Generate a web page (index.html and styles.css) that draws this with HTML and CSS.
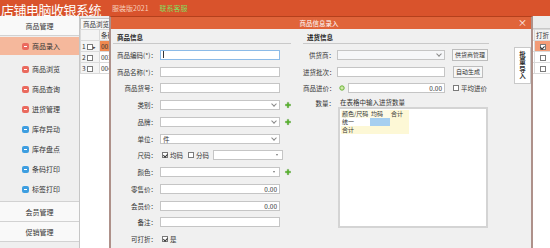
FILE: index.html
```html
<!DOCTYPE html>
<html lang="zh-CN">

<head>
    <meta charset="UTF-8">
    <title>店铺电脑收银系统</title>
    <link rel="stylesheet" href="styles.css">
</head>

<body>
    <div class="topbar">
        <span class="app-title">店铺电脑收银系统</span>
        <span class="app-edition">服装版2021</span>
        <span class="app-contact">联系客服</span>
    </div>

    <div class="main">
        <div class="sidebar">
            <div class="nav-group">商品管理</div>
            <ul class="nav-list">
                <li class="active"><i class="ico red"></i>商品录入</li>
                <li><i class="ico red"></i>商品浏览</li>
                <li><i class="ico red"></i>商品查询</li>
                <li><i class="ico red"></i>进货管理</li>
                <li><i class="ico blue"></i>库存异动</li>
                <li><i class="ico blue"></i>库存盘点</li>
                <li><i class="ico blue"></i>条码打印</li>
                <li><i class="ico blue"></i>标签打印</li>
            </ul>
            <div class="nav-group">会员管理</div>
            <div class="nav-group">促销管理</div>
        </div>

        <div class="browse">
            <div class="tab-bar"><span class="tab">商品浏览</span></div>
            <table class="goods-grid">
                <colgroup>
                    <col class="c-no">
                    <col class="c-code">
                    <col>
                    <col class="c-disc">
                </colgroup>
                <tr class="head">
                    <th></th>
                    <th>条码</th>
                    <th></th>
                    <th>打折</th>
                </tr>
                <tr class="cur">
                    <td class="rn">1 <i class="cb"></i><span class="ptr">▸</span></td>
                    <td class="hot">001</td>
                    <td></td>
                    <td class="sel-cell"><i class="cb on"></i></td>
                </tr>
                <tr>
                    <td class="rn">2 <i class="cb"></i></td>
                    <td>002</td>
                    <td></td>
                    <td><i class="cb"></i></td>
                </tr>
                <tr>
                    <td class="rn">3 <i class="cb"></i></td>
                    <td>004</td>
                    <td></td>
                    <td><i class="cb"></i></td>
                </tr>
            </table>

            <!-- 录入窗口 -->
            <div class="dialog">
                <div class="dlg-title">
                    <span></span>
                    <span>商品信息录入</span>
                    <span class="dlg-close">×</span>
                </div>
                <div class="dlg-body">
                    <div class="grp grp-goods">
                        <div class="grp-head">商品信息</div>
                        <div class="rows">
                            <div class="row">
                                <span class="lbl">商品编码(*)：</span>
                                <div class="field focus"><i class="caret"></i></div>
                            </div>
                            <div class="row">
                                <span class="lbl">商品名称(*)：</span>
                                <div class="field"></div>
                            </div>
                            <div class="row">
                                <span class="lbl">商品货号：</span>
                                <div class="field"></div>
                            </div>
                            <div class="row">
                                <span class="lbl">类别：</span>
                                <div class="field sel"></div>
                                <svg class="plus" viewBox="0 0 8 8"><path d="M3 .5h2v2.5h2.5v2H5v2.5H3V5H.5V3H3z" /></svg>
                            </div>
                            <div class="row">
                                <span class="lbl">品牌：</span>
                                <div class="field sel"></div>
                                <svg class="plus" viewBox="0 0 8 8"><path d="M3 .5h2v2.5h2.5v2H5v2.5H3V5H.5V3H3z" /></svg>
                            </div>
                            <div class="row">
                                <span class="lbl">单位：</span>
                                <div class="field sel">件</div>
                            </div>
                            <div class="row">
                                <span class="lbl">尺码：</span>
                                <i class="cb on first"></i><span>均码</span>
                                <i class="cb gap"></i><span>分码</span>
                                <div class="field sel tri size-sel"></div>
                            </div>
                            <div class="row">
                                <span class="lbl">颜色：</span>
                                <div class="field sel tri"></div>
                                <svg class="plus" viewBox="0 0 8 8"><path d="M3 .5h2v2.5h2.5v2H5v2.5H3V5H.5V3H3z" /></svg>
                            </div>
                            <div class="row">
                                <span class="lbl">零售价：</span>
                                <div class="field num">0.00</div>
                            </div>
                            <div class="row">
                                <span class="lbl">会员价：</span>
                                <div class="field num">0.00</div>
                            </div>
                            <div class="row">
                                <span class="lbl">备注：</span>
                                <div class="field"></div>
                            </div>
                            <div class="row">
                                <span class="lbl">可打折：</span>
                                <i class="cb on first"></i><span>是</span>
                            </div>
                        </div>
                    </div>

                    <div class="grp grp-stock">
                        <div class="grp-head">进货信息</div>
                        <div class="rows">
                            <div class="row">
                                <span class="lbl">供货商：</span>
                                <div class="field sel shaded"></div>
                                <span class="btn btn-wide">供货商管理</span>
                            </div>
                            <div class="row">
                                <span class="lbl">进货批次：</span>
                                <div class="field"></div>
                                <span class="btn">自动生成</span>
                            </div>
                            <div class="row">
                                <span class="lbl">商品进价：</span>
                                <svg class="dot" viewBox="0 0 6 6"><circle cx="3" cy="3" r="2.2" /></svg>
                                <div class="field num short">0.00</div>
                                <i class="cb gap-l"></i><span>平均进价</span>
                            </div>
                            <div class="row qty">
                                <span class="lbl">数量：</span>
                                <div class="qty-box">
                                    <div class="hint">在表格中输入进货数量</div>
                                    <div class="qty-grid">
                                        <table class="mini">
                                            <tr class="mh">
                                                <td>颜色/尺码</td>
                                                <td>均码</td>
                                                <td class="ys">合计</td>
                                            </tr>
                                            <tr>
                                                <td class="wt">统一</td>
                                                <td class="bl"></td>
                                                <td class="ys"></td>
                                            </tr>
                                            <tr class="ys">
                                                <td>合计</td>
                                                <td></td>
                                                <td></td>
                                            </tr>
                                        </table>
                                    </div>
                                </div>
                            </div>
                        </div>
                    </div>

                    <div class="batch-btn">批量导入</div>
                </div>
            </div>
        </div>
    </div>
</body>

</html>
```

FILE: styles.css
```css
* {
    box-sizing: border-box;
}

html,
body {
    margin: 0;
    padding: 0;
}

body {
    width: 550px;
    height: 248px;
    overflow: hidden;
    font-family: "Noto Sans CJK SC", "Noto Sans", sans-serif;
    font-size: 7px;
    color: #333;
    background: #efefef;
}

/* 顶部标题 */
.topbar {
    height: 16px;
    display: flex;
    align-items: flex-start;
    padding-left: 1px;
    background: #d9532c;
    white-space: nowrap;
}

.app-title {
    padding-top: 2px;
    font-size: 13px;
    line-height: 16px;
    letter-spacing: -0.5px;
    color: #fff;
}

.app-edition {
    align-self: center;
    margin-left: 11px;
    color: #f7cdb9;
}

.app-contact {
    align-self: center;
    margin-left: 11px;
    color: #86db5e;
}

.main {
    display: flex;
    height: 232px;
}

/* 左侧菜单 */
.sidebar {
    width: 80px;
    flex: none;
    background: #efefef;
    border-right: 1px solid #c6c6c6;
}

.nav-group {
    height: 20px;
    line-height: 20px;
    text-align: center;
    background: #f9f9f9;
    border-bottom: 1px solid #d2d2d2;
}

.nav-list {
    list-style: none;
    margin: 0;
    padding: 1px 0 2px;
    border-bottom: 1px solid #d2d2d2;
}

.nav-list li {
    height: 20px;
    display: flex;
    align-items: center;
    padding-left: 22px;
}

.nav-list li.active {
    height: 18px;
    margin-bottom: 4px;
    background: #f5b89c;
}

.ico {
    width: 7px;
    height: 7px;
    margin-right: 3px;
    border-radius: 2px;
    display: flex;
    align-items: center;
    justify-content: center;
}

.ico::after {
    content: "";
    width: 3px;
    height: 1px;
    background: #fff;
}

.ico.red {
    background: #ea6a5e;
}

.ico.blue {
    background: #3d9ee0;
}

/* 商品浏览表格 */
.browse {
    flex: 1;
    position: relative;
    background: #fff;
}

.tab-bar {
    height: 13px;
    padding-top: 2px;
    background: #ececec;
    border-bottom: 1px solid #c8c8c8;
}

.tab {
    display: inline-block;
    height: 11px;
    line-height: 10px;
    padding: 0 2px;
    background: #f8f8f8;
    border: 1px solid #c4c4c4;
    border-bottom: none;
    font-size: 6.5px;
}

.goods-grid {
    width: 471px;
    table-layout: fixed;
    border-collapse: collapse;
    font-size: 6.5px;
}

.c-no {
    width: 19px;
}

.c-code {
    width: 30px;
}

.c-disc {
    width: 16px;
}

.goods-grid th,
.goods-grid td {
    height: 11px;
    padding: 0 1px;
    border: 1px solid #dadada;
    text-align: left;
    font-weight: normal;
    white-space: nowrap;
    overflow: hidden;
}

.goods-grid th {
    background: #f4f4f4;
}

.goods-grid td.rn {
    background: #f4f4f4;
}

.goods-grid td.hot {
    background: #f0894f;
}

.goods-grid td.sel-cell {
    background: #f39b76;
}

.goods-grid td:last-child {
    text-align: center;
}

.ptr {
    font-size: 5px;
}

/* 复选框 */
.cb {
    width: 6px;
    height: 6px;
    display: inline-flex;
    align-items: center;
    justify-content: center;
    vertical-align: middle;
    background: #fff;
    border: 1px solid #7a7a7a;
}

.cb.on::after {
    content: "";
    width: 1.5px;
    height: 3px;
    margin-top: -1px;
    border: solid #333;
    border-width: 0 1px 1px 0;
    transform: rotate(45deg);
}

.cb.first {
    margin: 0 2px 0 2px;
}

.cb.gap {
    margin: 0 2px 0 5px;
}

.cb.gap-l {
    margin: 0 2px 0 8px;
}

/* 录入窗口 */
.dialog {
    position: absolute;
    left: 29px;
    top: 0;
    width: 424px;
    height: 240px;
    background: #f0f0f0;
    border: 2px solid #ae918a;
    border-top: 1px solid #b4401c;
}

.dlg-title {
    height: 12px;
    display: grid;
    grid-template-columns: 1fr auto 1fr;
    align-items: center;
    padding-right: 4px;
    background: #e0643a;
    color: #fff;
    font-size: 6.5px;
}

.dlg-close {
    justify-self: end;
    font-size: 9px;
    line-height: 12px;
}

.dlg-body {
    display: flex;
    padding-left: 2px;
}

.grp-goods {
    width: 178px;
    margin-right: 12px;
}

.grp-stock {
    width: 186px;
}

.grp-head {
    height: 15px;
    padding: 3px 0 0 4px;
    line-height: 10px;
    font-size: 6.5px;
    font-weight: bold;
    color: #222;
    border-bottom: 1px solid #c9c9c9;
}

.rows {
    margin-top: 2.6px;
    font-size: 6.5px;
}

.row {
    height: 16.75px;
    display: flex;
    align-items: center;
    white-space: nowrap;
}

.lbl {
    width: 44px;
    flex: none;
    margin-right: 3px;
    text-align: right;
}

.grp-stock .lbl {
    width: 32px;
    margin-right: 2px;
}

.field {
    width: 120px;
    height: 10px;
    flex: none;
    display: flex;
    align-items: center;
    padding: 0 2px;
    background: #fff;
    border: 1px solid #c5c5c5;
    line-height: 8px;
}

.grp-stock .field {
    width: 108px;
}

.grp-stock .field.short {
    width: 97px;
    margin-left: 3px;
}

.field.focus {
    border-color: #8cbbe8;
}

.caret {
    width: 1px;
    height: 7px;
    background: #333;
}

.field.num {
    justify-content: flex-end;
}

.field.shaded {
    background: #f6f7f9;
}

.field.sel::after {
    content: "";
    margin-left: auto;
    margin-right: 1px;
    width: 3px;
    height: 3px;
    border: solid #8a8a8a;
    border-width: 0 1px 1px 0;
    transform: translateY(-1px) rotate(45deg);
}

.field.sel.tri::after {
    width: 0;
    height: 0;
    margin-right: 2px;
    border-style: solid;
    border-width: 2px 1.5px 0;
    border-color: #777 transparent transparent;
    transform: none;
}

.field.size-sel {
    width: 70px;
    margin-left: 4px;
}

.plus {
    width: 8px;
    height: 8px;
    margin-left: 5px;
    fill: #56b32a;
    stroke: #3f8f1c;
    stroke-width: 0.4;
    stroke-linejoin: round;
}

.dot {
    width: 6px;
    height: 6px;
    margin-left: 2px;
    fill: #cfe9a8;
    stroke: #6bb33a;
    stroke-width: 1;
}

.btn {
    height: 12px;
    line-height: 10px;
    margin-left: 8px;
    padding: 0 2px;
    background: #f7f7f7;
    border: 1px solid #bdbdbd;
    font-size: 6px;
}

.btn-wide {
    margin-left: 7px;
}

.row.qty {
    height: auto;
    align-items: flex-start;
}

.row.qty .lbl {
    padding-top: 1px;
}

.hint {
    height: 10px;
    line-height: 10px;
    padding-left: 3px;
}

.qty-grid {
    width: 150px;
    height: 121px;
    margin-left: 1px;
    padding: 1px;
    background: #fff;
    border: 2px solid #d4d4d4;
}

.mini {
    border-collapse: collapse;
    font-size: 6px;
    background: #fdfbe6;
}

.mini td {
    height: 8px;
    padding: 0 1px;
    line-height: 8px;
}

.mini td:nth-child(1) {
    width: 29px;
}

.mini td:nth-child(2) {
    width: 20px;
}

.mini td:nth-child(3) {
    width: 19px;
}

.mini .wt {
    background: #fff;
}

.mini .bl {
    background: #a6cff0;
}

.mini .ys,
.mini tr.ys td {
    background: #fdf8d6;
}

.batch-btn {
    width: 17px;
    height: 37px;
    margin: 18px 0 0 auto;
    display: flex;
    align-items: center;
    justify-content: center;
    background: #fff;
    border: 1px solid #c9c9c9;
    writing-mode: vertical-rl;
    text-orientation: upright;
    letter-spacing: 1px;
    font-size: 6.5px;
    font-weight: bold;
}
```
